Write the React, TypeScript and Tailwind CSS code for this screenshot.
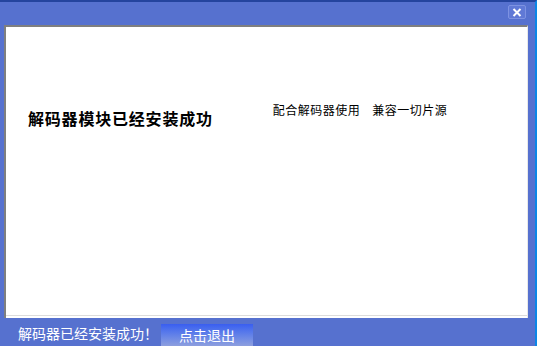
import React from "react";

export default function App() {
  const cjk = { fontFamily: '"Noto Sans CJK SC", "Noto Sans", sans-serif' } as React.CSSProperties;
  return (
    <div
      className="w-[537px] h-[346px] flex flex-col bg-[#5671cf] border-t-2 border-t-[#24449e] border-r-2 border-r-[#0c86e6] overflow-hidden"
      style={cjk}
    >
      <div className="h-[23px] flex justify-end items-start pr-[9px] pt-[3px]">
        <div className="w-[18px] h-[14px] bg-[#6079d6] border border-[#7d92e2] rounded-[2px] flex items-center justify-center">
          <svg width="10" height="9" viewBox="0 0 10 9">
            <path d="M1.5 1 L8.5 8 M8.5 1 L1.5 8" stroke="#ffffff" strokeWidth="2" />
          </svg>
        </div>
      </div>
      <div className="ml-[4px] w-[524px] h-[293px] bg-white border-t-2 border-l-2 border-[#7f7f7f] border-r border-r-[#e8e8e8] flex flex-col">
        <div className="flex-1 flex items-start">
          <div className="ml-[22px] mt-[82px] text-[16px] leading-[18px] font-bold text-black tracking-[0.8px]">
            解码器模块已经安装成功
          </div>
          <div className="ml-[60px] mt-[76px] flex gap-[12px] text-[12px] leading-[14px] text-black tracking-[0.5px]">
            <span>配合解码器使用</span>
            <span>兼容一切片源</span>
          </div>
        </div>
        <div className="h-[1px] bg-[#dcdcdc] mb-[2px]" />
      </div>
      <div className="flex-1 flex items-end">
        <div className="ml-[18px] mb-[5px] text-[14px] leading-[16px] text-white">
          解码器已经安装成功！
        </div>
        <div className="ml-[3px] w-[92px] h-[22px] bg-gradient-to-b from-[#3a5ef0] to-[#8d9ede] flex items-center justify-center text-white text-[14px] leading-[16px]">
          点击退出
        </div>
      </div>
    </div>
  );
}
